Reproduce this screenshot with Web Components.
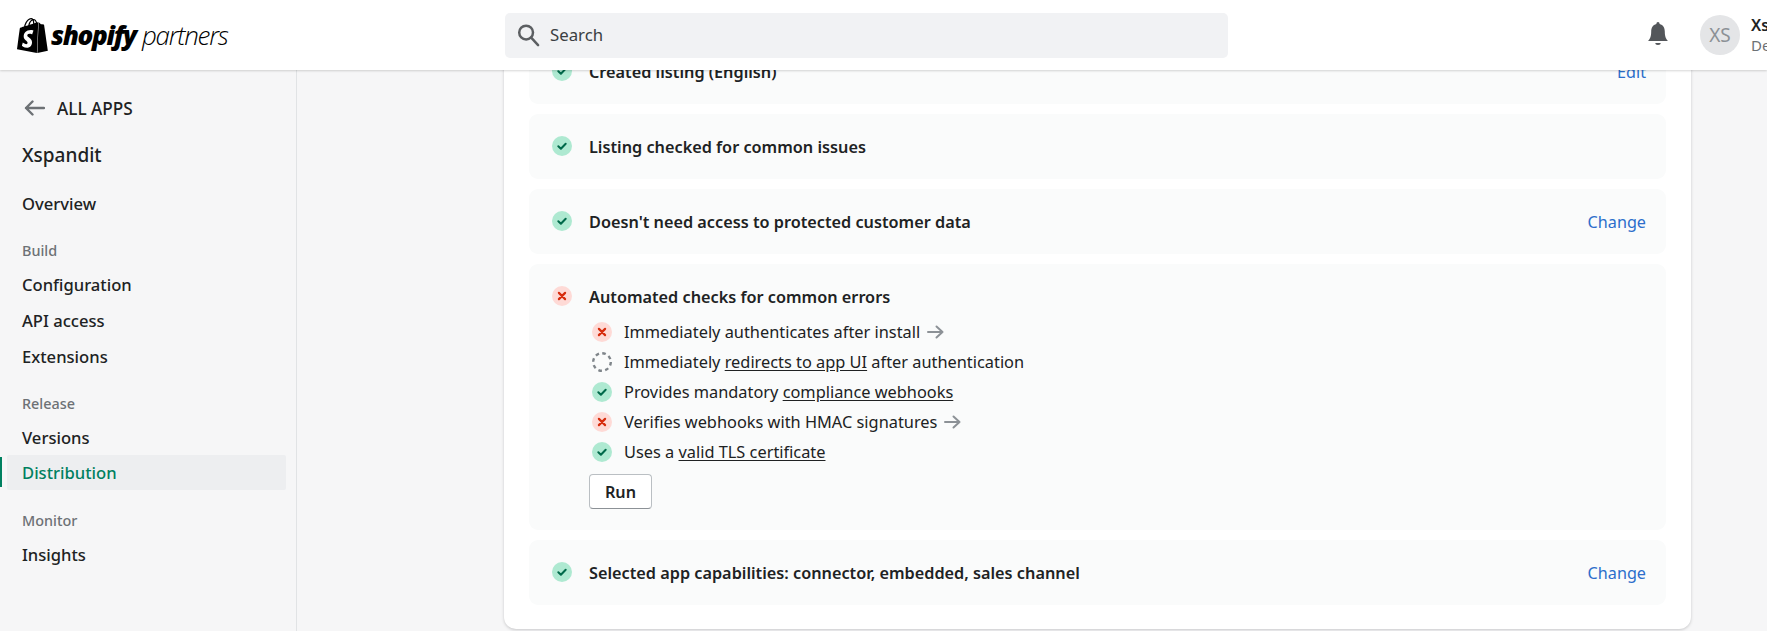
<!DOCTYPE html>
<html lang="en">
<head>
<meta charset="utf-8">
<title>Shopify Partners</title>
<style>
html,body{margin:0;height:100%;overflow:hidden;background:#f6f6f7}
body{font-family:"Noto Sans","Open Sans","Liberation Sans",sans-serif;color:#202223}
</style>
</head>
<body>
<partner-app>
  <partner-header slot="header"></partner-header>
  <partner-sidebar slot="side">
    <nav-back>ALL APPS</nav-back>
    <nav-title>Xspandit</nav-title>
    <nav-item>Overview</nav-item>
    <nav-label>Build</nav-label>
    <nav-item>Configuration</nav-item>
    <nav-item>API access</nav-item>
    <nav-item>Extensions</nav-item>
    <nav-label>Release</nav-label>
    <nav-item>Versions</nav-item>
    <nav-item active>Distribution</nav-item>
    <nav-label>Monitor</nav-label>
    <nav-item>Insights</nav-item>
  </partner-sidebar>
  <check-card>
    <check-row status="ok" action="Edit">Created listing (English)</check-row>
    <check-row status="ok">Listing checked for common issues</check-row>
    <check-row status="ok" action="Change">Doesn't need access to protected customer data</check-row>
    <check-row status="fail">
      Automated checks for common errors
      <check-item slot="details" status="fail" arrow>Immediately authenticates after install</check-item>
      <check-item slot="details" status="pending">Immediately <a-link>redirects to app UI</a-link> after authentication</check-item>
      <check-item slot="details" status="ok">Provides mandatory <a-link>compliance webhooks</a-link></check-item>
      <check-item slot="details" status="fail" arrow>Verifies webhooks with HMAC signatures</check-item>
      <check-item slot="details" status="ok">Uses a <a-link>valid TLS certificate</a-link></check-item>
      <run-button slot="details">Run</run-button>
    </check-row>
    <check-row status="ok" action="Change">Selected app capabilities: connector, embedded, sales channel</check-row>
  </check-card>
</partner-app>
<script>
const FONT = '"Noto Sans","Open Sans","Liberation Sans",sans-serif';
function def(name, html) {
  customElements.define(name, class extends HTMLElement {
    constructor() {
      super();
      this.attachShadow({mode:'open'}).innerHTML = typeof html === 'function' ? html(this) : html;
    }
  });
}
def('partner-app', `<style>
  :host{display:grid;grid-template-columns:297px 1fr;grid-template-rows:70px 561px;width:1767px;height:631px;overflow:hidden}
  .h{grid-column:1/3;position:relative;z-index:2;min-width:0}
  .s{min-width:0}
  main{min-width:0;overflow:hidden;padding-left:207px}
</style>
<div class="h"><slot name="header"></slot></div>
<div class="s"><slot name="side"></slot></div>
<main><slot></slot></main>`);

def('partner-header', `<style>
  :host{display:flex;align-items:center;height:70px;background:#fff;box-shadow:0 1px 2px rgba(0,0,0,.16);overflow:hidden;box-sizing:border-box}
  .logo{display:flex;align-items:center;width:505px;flex:none;height:70px;box-sizing:border-box;padding-left:15px;color:#000}
  .logo svg{width:35px;height:35px;flex:none}
  .w1{font:italic 800 26px/1 "Open Sans",sans-serif;letter-spacing:-1.3px;margin-left:1px;display:inline-block;width:91px}
  .w2{font:italic 300 26px/1 "Open Sans",sans-serif;letter-spacing:-1.3px;display:inline-block}
  .search{display:flex;align-items:center;gap:10px;width:723px;height:45px;flex:none;background:#f1f2f4;border-radius:5px;padding:0 0 2px 12px;box-sizing:border-box;font:16.8px ${FONT};color:#3b3f42}
  .search svg{width:23px;height:24px;flex:none;margin-top:2px}
  .bell{margin-left:420px;width:20px;height:26px;flex:none}
  .avatar{margin-left:32px;width:40px;height:40px;border-radius:50%;background:#e4e5e7;color:#8c9196;display:flex;align-items:center;justify-content:center;font:19px ${FONT};flex:none}
  .who{margin-left:11px;font:16px/20px ${FONT};flex:none}
  .who b{display:block;font-weight:600;color:#202223}
  .who span{display:block;color:#6d7175;font-size:15px}
</style>
<div class="logo">
  <svg viewBox="0 0 24 24" fill="#000"><path d="M15.337 23.979l7.216-1.561s-2.604-17.613-2.625-17.73c-.018-.116-.114-.192-.211-.192s-1.929-.136-1.929-.136-1.275-1.274-1.439-1.411c-.045-.037-.075-.057-.121-.074l-.914 21.104h.023zM11.71 11.305s-.81-.424-1.774-.424c-1.447 0-1.504.906-1.504 1.141 0 1.232 3.24 1.715 3.24 4.629 0 2.295-1.44 3.76-3.406 3.76-2.354 0-3.54-1.465-3.54-1.465l.646-2.086s1.245 1.066 2.28 1.066c.675 0 .975-.545.975-.932 0-1.619-2.654-1.694-2.654-4.359-.034-2.237 1.571-4.416 4.827-4.416 1.257 0 1.875.361 1.875.361l-.945 2.715-.02.01zM11.17.83c.136 0 .271.038.405.135-.984.465-2.064 1.639-2.508 3.992-.656.213-1.293.405-1.889.578C7.697 3.75 8.951.84 11.17.84V.83zm1.235 2.949v.135c-.754.232-1.583.484-2.394.736.466-1.777 1.333-2.645 2.085-2.971.193.501.309 1.176.309 2.1zm.539-2.234c.694.074 1.141.867 1.429 1.755-.349.114-.735.231-1.158.366v-.252c0-.752-.096-1.371-.271-1.871v.002zm2.992 1.289c-.02 0-.06.021-.078.021s-.289.075-.714.21c-.423-1.233-1.176-2.37-2.508-2.37h-.115C12.135.209 11.669 0 11.265 0 8.159 0 6.675 3.877 6.21 5.846c-1.194.365-2.063.636-2.16.674-.675.213-.694.232-.772.87-.075.462-1.83 14.063-1.83 14.063L15.009 24l.927-21.166z"/></svg>
  <span class="w1">shopify</span><span class="w2">partners</span>
</div>
<div class="search">
  <svg viewBox="0 0 24 24" fill="none" stroke="#5c5f62" stroke-width="2.6"><circle cx="9.500" cy="9.500" r="7.200"/><path d="M14.800 14.800 22 22.500" stroke-linecap="round"/></svg>
  <span>Search</span>
</div>
<svg class="bell" viewBox="0 0 20 26" fill="#53565a"><path d="M10 0c1 0 1.600.8 1.600 1.900 3.600.8 5.200 3.700 5.200 7.600 0 5 1 7.200 3.200 9.500H0c2.200-2.300 3.200-4.500 3.200-9.500 0-3.900 1.600-6.800 5.200-7.600C8.400.8 9 0 10 0z"/><path d="M7.300 21h5.400c0 1-.9 2-2.700 2s-2.700-1-2.700-2z"/></svg>
<div class="avatar">XS</div>
<div class="who"><b>Xs</b><span>De</span></div>`);

def('partner-sidebar', `<style>
  :host{display:block;height:561px;box-sizing:border-box;padding-top:24px;border-right:1px solid #e1e3e5;background:#f6f6f7;font:500 16.6px ${FONT};color:#202223}
</style><slot></slot>`);

def('nav-back', `<style>
  :host{display:flex;align-items:center;height:28px;padding-left:24px;gap:12px;font-weight:500;font-size:17.2px}
  svg{width:21px;height:16px;flex:none}
</style>
<svg viewBox="0 0 21 16" fill="none" stroke="#6d7175" stroke-width="2.4" stroke-linecap="round" stroke-linejoin="round"><path d="M20 8H2M8.500 1.500 2 8l6.500 6.500"/></svg><slot></slot>`);

def('nav-title', `<style>
  :host{display:flex;align-items:center;height:30px;margin-top:18px;padding-left:22px;font-size:19px;font-weight:500;margin-bottom:16px}
</style><slot></slot>`);

def('nav-label', `<style>
  :host{display:flex;align-items:center;height:22px;margin-top:18px;margin-bottom:6px;padding-left:22px;font-size:14.4px;font-weight:500;color:#6d7175}
</style><slot></slot>`);

def('nav-item', `<style>
  :host{display:flex;align-items:center;height:35px;margin:0 10px 1px 7px;padding-left:15px;position:relative}
  :host([active]){background:#edeef0;color:#008060;border-radius:2px;top:-1px}
  :host([active])::before{content:"";position:absolute;left:-7px;top:2px;bottom:3px;width:1.500px;background:#008060}
</style><slot></slot>`);

def('check-card', `<style>
  :host{display:flex;flex-direction:column;gap:10px;width:1187px;box-sizing:border-box;margin-top:-56px;padding:25px 25px 24px;background:#fff;border-radius:12px;box-shadow:0 1px 3px rgba(63,63,68,.25)}
</style><slot></slot>`);

def('status-icon', h => {
  const s = h.getAttribute('status');
  let inner = '';
  if (s === 'ok') inner = '<circle cx="10" cy="10" r="10" fill="#aee9d1"/><path d="M6.300 10.300 8.900 12.800 13.700 7.700" fill="none" stroke="#00694a" stroke-width="2" stroke-linecap="round" stroke-linejoin="round"/>';
  if (s === 'fail') inner = '<circle cx="10" cy="10" r="10" fill="#fedad6"/><path d="M6.900 6.900 13.100 13.100M13.100 6.900 6.900 13.100" fill="none" stroke="#d72c0d" stroke-width="2.200" stroke-linecap="round"/>';
  if (s === 'pending') inner = '<circle cx="10" cy="10" r="8.800" fill="none" stroke="#7f858a" stroke-width="2.400" stroke-dasharray="3.600 3.310"/>';
  return `<style>:host{display:block;width:20px;height:20px;flex:none}svg{display:block;width:20px;height:20px}</style><svg viewBox="0 0 20 20">${inner}</svg>`;
});

def('check-row', h => {
  const status = h.getAttribute('status');
  const action = h.getAttribute('action');
  return `<style>
  :host{display:grid;grid-template-columns:20px 1fr auto;column-gap:17px;padding:21px 20px 21px 23px;background:#fafbfb;border-radius:9px;align-items:start;min-height:23px}
  status-icon{margin-top:1px}
  .t,.a{margin-top:1px;margin-bottom:-1px}
  .t{font:600 16.25px/23px ${FONT};color:#202223}
  .a{font:400 16.2px/23px ${FONT};color:#2c6ecb}
  .d{grid-column:2/4}
  ::slotted(check-item:first-of-type){margin-top:9px}
</style>
<status-icon status="${status}"></status-icon>
<div class="t"><slot></slot></div>
${action ? `<div class="a">${action}</div>` : ''}
<div class="d"><slot name="details"></slot></div>`;
});

def('check-item', h => {
  const status = h.getAttribute('status');
  const arrow = h.hasAttribute('arrow');
  return `<style>
  :host{display:flex;align-items:center;height:30px;padding-left:3px;gap:12px;font:400 16.35px/23px ${FONT};color:#202223}
  .arrow{width:17px;height:14px;margin-left:7px;vertical-align:-1px}
</style>
<status-icon status="${status}"></status-icon>
<span><slot></slot>${arrow ? '<svg class="arrow" viewBox="0 0 17 14" fill="none" stroke="#8c9196" stroke-width="2" stroke-linecap="round" stroke-linejoin="round"><path d="M1 7h14.500M9.500 1.500 15.500 7l-6 5.500"/></svg>' : ''}</span>`;
});

def('a-link', `<style>:host{display:inline;text-decoration:underline;text-underline-offset:2px}</style><slot></slot>`);

def('run-button', `<style>
  :host{display:flex;align-items:center;justify-content:center;width:63px;height:35px;box-sizing:border-box;margin-top:7px;background:#fff;border:1px solid #babfc3;border-bottom-color:#8c9196;border-radius:4px;font:600 16.2px ${FONT};color:#202223}
</style><slot></slot>`);
</script>
</body>
</html>
